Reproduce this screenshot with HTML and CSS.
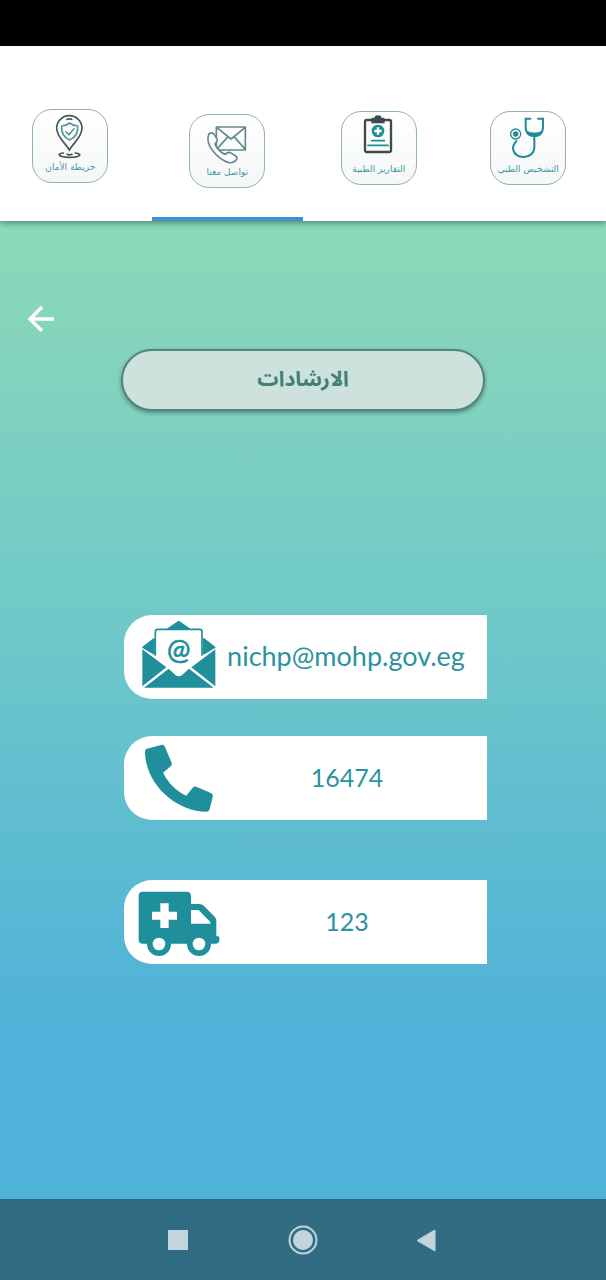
FILE: index.html
```html
<!DOCTYPE html>
<html lang="ar">
<head>
<meta charset="utf-8">
<meta name="viewport" content="width=device-width, initial-scale=1">
<title>الارشادات</title>
<link rel="stylesheet" href="styles.css">
</head>
<body>
<div class="status"></div>
<nav class="tabs">
  <button class="tab tab-first">
    <span class="badge">
      <svg class="badge-icon" viewBox="41 31 222 150" fill="none" stroke-linecap="round">
        <g stroke="#4a5558" stroke-width="5">
          <path d="M150 151C138 130 112 112 112 86a38 38 0 0 1 76 0C188 112 162 130 150 151Z"/>
          <path d="M143 59q7-3 14 0M132 160c-22 2-14 13 18 13s42-9 18-13M143 164q8 3 15 0"/>
        </g>
        <path d="M151 70q11 9 24 9c2 22-6 34-24 42-18-8-26-20-24-42q13 0 24-9Z" stroke="#5797a0" stroke-width="5"/>
        <path d="m140 96 9 9 15-18" stroke="#3d7f87" stroke-width="4"/>
      </svg>
      <span class="badge-label">خريطة الأمان</span>
    </span>
  </button>
  <button class="tab tab-active">
    <span class="badge">
      <svg class="badge-icon" viewBox="33 44 222 150" fill="none" stroke="#63898f" stroke-width="5" stroke-linejoin="round">
        <path d="M112 80h87v69h-87ZM113 81l43 35 43-35M199 147l-34-38M113 147l34-38"/>
        <path d="M90 101C84 112 86 132 100 150c14 18 34 33 50 37 12 1 20-4 24-13q1-4-4-7l-16-10c-7-4-10 3-16 5-10-3-26-18-30-31 1-5 9-7 7-13l-10-17q-7-7-15 0Z" fill="#fbfcfc"/>
      </svg>
      <span class="badge-label">تواصل معنا</span>
    </span>
  </button>
  <button class="tab">
    <span class="badge">
      <svg class="badge-icon" viewBox="39 36 222 150" fill="none">
        <rect x="108" y="60" width="78" height="96" rx="5" stroke="#3f4a4e" stroke-width="7"/>
        <path d="M127 70V57q0-4 5-4h5q0-7 10-7t10 7h5q5 0 5 4v13Z" fill="#3f4a4e"/>
        <circle cx="147" cy="93" r="19" fill="#218c98"/>
        <path d="M147 82v22M136 93h22" stroke="#fff" stroke-width="7"/>
        <path d="M126 122h42M115 136h64" stroke="#218c98" stroke-width="5"/>
      </svg>
      <span class="badge-label">التقارير الطبية</span>
    </span>
  </button>
  <button class="tab tab-last">
    <span class="badge">
      <svg class="badge-icon" viewBox="35 37 222 150" fill="none" stroke="#218c98" stroke-width="6" stroke-linecap="round">
        <path d="M153 57h-14v26c0 18 13 26 26 26s26-8 26-26V57h-15"/>
        <path d="M141 94q24 12 48 0l-5 12q-18 9-37 0Z" fill="#218c98" stroke-width="2"/>
        <path d="M165 109v33c0 39-63 40-64 3 0-8 5-14 10-21"/>
        <circle cx="109" cy="103" r="15" stroke-width="4"/><circle cx="109" cy="103" r="8" fill="#218c98" stroke="none"/>
      </svg>
      <span class="badge-label">التشخيص الطبي</span>
    </span>
  </button>
</nav>
<main class="screen">
  <button class="back" aria-label="رجوع">
    <svg width="30" height="30" viewBox="0 0 30 30" fill="none" stroke="#fff" stroke-width="3.500"><path d="M28 15H4M16 3 4 15l12 12"/></svg>
  </button>
  <h1 class="title">الارشادات</h1>
  <div class="cards">
    <a class="card" href="mailto:nichp@mohp.gov.eg">
      <svg class="card-icon" viewBox="-33 0 285 252" fill="none">
        <path d="m131 20 32 22H99ZM57 72v44L24 97ZM206 72v44l33-19Z" fill="#1e8f9b" stroke="#1e8f9b" stroke-width="5" stroke-linejoin="round"/>
        <path d="M22 103v111l72-57ZM241 103v111l-72-57ZM27 218l74-57 21 20q9 6 18 0l22-20 74 57Z" fill="#1e8f9b"/>
        <path d="M60 124V51q0-9 8-9h127q8 0 8 9v73l-64 56q-7 5-15 0Z" fill="#fff"/>
        <path d="M61 122V50q0-7 7-7h126q7 0 7 7v72" stroke="#1e8f9b" stroke-width="5"/>
        <text class="at-sign" x="131" y="134" text-anchor="middle">@</text>
      </svg>
      <span class="card-text">nichp@mohp.gov.eg</span>
    </a>
    <a class="card" href="tel:16474">
      <svg class="card-icon" viewBox="0 0 285 252">
        <path d="m69 38 42-11q9-2 12 6l20 48q2 6-3 10l-23 19c16 31 38 54 70 69l19-24q4-5 11-3l45 20q6 4 4 11l-9 36q-2 8-9 8C153 227 63 141 63 46q0-7 6-8Z" fill="#1e8f9b"/>
      </svg>
      <span class="card-text card-number">16474</span>
    </a>
    <a class="card card-last" href="tel:123">
      <svg class="card-icon" viewBox="0 0 285 252">
        <path d="M56 35h132q13 0 13 13v24h25q8 0 14 6l32 32q5 5 5 13v46h5q4 0 4 4v8q0 10-10 10H56q-12 0-12-12V47q0-12 12-12Z" fill="#1e8f9b"/>
        <circle cx="105" cy="192" r="36" fill="#1e8f9b"/><circle cx="225" cy="192" r="36" fill="#1e8f9b"/>
        <path d="M109 70h25v25h25v24h-25v25h-25v-25H84V95h25ZM201 90h23l35 36v5h-58Z" fill="#fff"/>
        <circle cx="105" cy="192" r="19" fill="#fff"/><circle cx="225" cy="192" r="19" fill="#fff"/>
      </svg>
      <span class="card-text card-number">123</span>
    </a>
  </div>
</main>
<footer class="system-nav">
  <button class="nav-button" aria-label="Recent apps"><svg width="30" height="30" viewBox="0 0 30 30"><path d="M5 5h20v20H5Z" fill="#c3d5dc"/></svg></button>
  <button class="nav-button" aria-label="Home"><svg width="30" height="30" viewBox="0 0 30 30"><circle cx="15" cy="15" r="13.5" fill="none" stroke="#b9d5df" stroke-width="2"/><circle cx="15" cy="15" r="10" fill="#c3d5dc"/></svg></button>
  <button class="nav-button" aria-label="Back"><svg width="30" height="30" viewBox="0 0 30 30"><path d="M22 5v21L4 15.500Z" fill="#c3d5dc" stroke="#c3d5dc" stroke-linejoin="round"/></svg></button>
</footer>
</body>
</html>
```
FILE: styles.css
```css
* {
  box-sizing: border-box;
}

body {
  margin: 0;
  min-height: 100vh;
  display: flex;
  flex-direction: column;
  font-family: Lato, "Noto Sans Arabic", sans-serif;
}

button {
  padding: 0;
  border: 0;
  background: none;
  font: inherit;
}

svg {
  display: block;
}

.status {
  height: 46px;
  background: #000;
}

.tabs {
  display: grid;
  grid-template-columns: repeat(4, 1fr);
  height: 175px;
  background: #fff;
  box-shadow: 0 2px 6px rgba(0, 0, 0, 0.4);
  z-index: 1;
}

.tab {
  display: flex;
  justify-content: center;
  align-items: flex-start;
  padding-top: 65px;
  border-bottom: 4px solid transparent;
}

.tab-first {
  padding-top: 63px;
  padding-right: 11px;
}

.tab-active {
  padding-top: 68px;
  border-bottom-color: #3b93d3;
}

.tab-last {
  padding-right: 4px;
}

.badge {
  display: flex;
  flex-direction: column;
  width: 76px;
  height: 74px;
  border: 1px solid #8fb3b0;
  border-radius: 20px;
  background: linear-gradient(#fff, #f5f6f6);
}

.badge-icon {
  width: 74px;
  height: 50px;
}

.badge-label {
  color: #3f9ba6;
  font-family: "DejaVu Sans", sans-serif;
  font-size: 9px;
  line-height: 14px;
  text-align: center;
  white-space: nowrap;
}

.screen {
  flex: 1;
  display: flex;
  flex-direction: column;
  align-items: center;
  padding-top: 83px;
  background: linear-gradient(#8bdab9 0%, #84d4bd 13%, #70c9c8 40%, #5cbad2 66%, #50b2d8 82%, #4fb2d8 100%);
}

.back {
  align-self: flex-start;
  margin-left: 26px;
}

.title {
  width: 60%;
  height: 62px;
  margin: 15px 0 0;
  border: 2px solid #4f857b;
  border-radius: 31px;
  background: #cee2dd;
  box-shadow: 0 2px 4px rgba(0, 0, 0, 0.35);
  color: #417f76;
  font-size: 21px;
  font-weight: 700;
  line-height: 54px;
  text-align: center;
}

.cards {
  display: flex;
  flex-direction: column;
  gap: 37px;
  width: 60%;
  margin: 204px 0 0 5px;
}

.card {
  display: flex;
  align-items: center;
  height: 84px;
  border-radius: 28px 0 0 28px;
  background: #fff;
  color: #2b93a0;
  text-decoration: none;
}

.card-last {
  margin-top: 23px;
}

.card-icon {
  flex: none;
  width: 95px;
  height: 84px;
  overflow: visible;
}

.at-sign {
  fill: #1e8f9b;
  font-family: Lato, sans-serif;
  font-size: 84px;
  font-weight: 400;
  stroke: #1e8f9b;
  stroke-width: 2px;
}

.card-text {
  flex: 1;
  padding: 0 14px 4px 0;
  font-size: 27px;
  text-align: center;
}

.card-number {
  padding: 0 12px 2px 0;
  font-size: 25px;
}

.system-nav {
  display: flex;
  justify-content: center;
  align-items: center;
  gap: 95px;
  height: 81px;
  background: #306d82;
}
```
